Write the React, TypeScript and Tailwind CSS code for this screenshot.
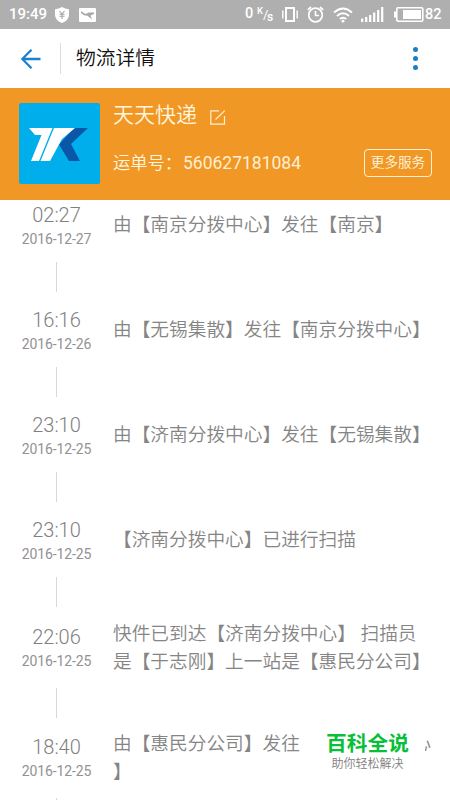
type Props_step = {
    time: string,
    date: string,
    text: string[],
    tail?: string,
}

const steps: Props_step[] = [
    { time: "02:27", date: "2016-12-27", text: ["由【南京分拨中心】发往【南京】"] },
    { time: "16:16", date: "2016-12-26", text: ["由【无锡集散】发往【南京分拨中心】"] },
    { time: "23:10", date: "2016-12-25", text: ["由【济南分拨中心】发往【无锡集散】"] },
    { time: "23:10", date: "2016-12-25", text: ["【济南分拨中心】已进行扫描"] },
    { time: "22:06", date: "2016-12-25", text: ["快件已到达【济南分拨中心】 扫描员", "是【于志刚】上一站是【惠民分公司】"] },
    { time: "18:40", date: "2016-12-25", text: ["由【惠民分公司】发往", "】"], tail: "心" },
];

function StatusBar() {
    return (
        <div className="flex h-[29px] w-full shrink-0 items-center bg-[#afafaf] text-white">
            <span className="ml-[9px] w-[46px] text-[15px] leading-none font-medium">19:49</span>
            <svg className="h-[16px] w-[14px]" viewBox="0 0 14 16">
                <path d="M7 0 Q10 2 14 2.2 V8 Q14 13 7 16 Q0 13 0 8 V2.2 Q4 2 7 0 Z" fill="#fff" />
                <path d="M4.5 4 L7 7 L9.5 4 M4.5 7.2 H9.5 M4.5 9.3 H9.5 M7 7 V12" stroke="#a5a5a5" strokeWidth="1.1" fill="none" />
            </svg>
            <svg className="ml-[10px] h-[14px] w-[17px]" viewBox="0 0 17 14">
                <rect width="17" height="14" rx="1" fill="#fff" />
                <path d="M2 3 L6.5 6 L9.5 4.5 H15 V6 L11.5 7.5 L13 11.5 L8.5 7.8 L5 7.2 L2 5 Z" fill="#a9a9a9" />
            </svg>
            <span className="ml-[149px] w-[10px] text-[14.5px] leading-none font-medium">0</span>
            <span className="ml-[2px] mb-[7px] w-[6px] text-[9.5px] leading-none font-medium">K</span>
            <span className="w-[4px] text-[13px] leading-none">/</span>
            <span className="mt-[4px] w-[15px] text-[12px] leading-none font-medium">s</span>
            <svg className="h-[15px] w-[16px]" viewBox="0 0 16 15" fill="none" stroke="#fff">
                <rect x="4" y="1" width="8" height="13" strokeWidth="2" />
                <path d="M0.8 3.5 V11.5 M15.2 3.5 V11.5" strokeWidth="1.4" />
            </svg>
            <svg className="ml-[9px] h-[17px] w-[17px]" viewBox="0 0 17 17" fill="none" stroke="#fff" strokeWidth="1.7">
                <circle cx="8.5" cy="9" r="6.8" />
                <path d="M8.5 5 V9.5 H12 M0.8 3.8 L4 1 M16.2 3.8 L13 1" />
            </svg>
            <svg className="ml-[9px] h-[16px] w-[20px]" viewBox="0 0 20 16" fill="none" stroke="#fff" strokeWidth="1.9">
                <path d="M1 5.5 Q10 -2.5 19 5.5 M4 9 Q10 3.6 16 9 M6.8 12 Q10 9.3 13.2 12" />
                <circle cx="10" cy="14.2" r="1.4" fill="#fff" stroke="none" />
            </svg>
            <svg className="ml-[8px] h-[15px] w-[23px]" viewBox="0 0 23 15" stroke="#fff" strokeWidth="2.2">
                <path d="M1.2 11.5 V15 M5.2 10 V15 M9.2 8 V15 M13.2 5.5 V15 M17.2 3 V15 M21.2 0 V15" />
            </svg>
            <svg className="ml-[10px] h-[15px] w-[30px]" viewBox="0 0 30 15">
                <rect x="2.8" y="0.8" width="26" height="13.4" rx="1.2" fill="none" stroke="#fff" strokeWidth="1.6" />
                <rect x="0" y="4.5" width="2.5" height="6" fill="#fff" />
                <rect x="9" y="3" width="18" height="9" fill="#fff" />
            </svg>
            <span className="mt-[2px] ml-px text-[14.5px] leading-none font-medium">82</span>
        </div>
    )
}

function TitleBar() {
    return (
        <header className="flex h-[59px] shrink-0 items-center bg-white">
            <svg className="ml-[21px] h-[20px] w-[20px]" viewBox="0 0 20 20" fill="none" stroke="#1b82d2" strokeWidth="2.3">
                <path d="M10.5 0.8 L1.3 10 L10.5 19.2 M1.3 10 H19.5" />
            </svg>
            <span className="ml-[19px] h-[31px] w-px bg-[#dcdcdc]" />
            <h1 className="ml-[15px] text-[19.8px] leading-none font-[350] text-[#111]">物流详情</h1>
            <span className="mr-[32px] ml-auto flex flex-col gap-[4px]">
                <span className="h-[5px] w-[5px] rounded-full bg-[#1b7fc4]" />
                <span className="h-[5px] w-[5px] rounded-full bg-[#1b7fc4]" />
                <span className="h-[5px] w-[5px] rounded-full bg-[#1b7fc4]" />
            </span>
        </header>
    )
}

function Courier() {
    return (
        <section className="flex h-[112px] shrink-0 items-start bg-[#f19726] pt-[15px] pl-[19px] text-[#fff6df]">
            <svg className="h-[81px] w-[81px] shrink-0" viewBox="0 0 81 81">
                <rect width="81" height="81" rx="2" fill="#00aeec" />
                <path d="M55 25 H69 L52 41 L61 58 H50 L40 41.5 Z" fill="#0a57a8" />
                <path d="M10 25 H33.5 L20 58 H12 L22.5 32 H16 Z M35 25 H56 L43 36 L31 58 H21.5 Z" fill="#fff" />
            </svg>
            <div className="ml-[13px] flex flex-1 flex-col">
                <div className="flex h-[24px] items-center">
                    <span className="text-[21px] leading-none font-[350]">天天快递</span>
                    <svg className="ml-[13px] mt-[5px] h-[15px] w-[16px]" viewBox="0 0 16 15" fill="none" stroke="#fff1cf" strokeWidth="1.2">
                        <path d="M9 0.8 H0.8 V14.2 H14.5 V6 M5.5 9.5 L14.8 0.6" />
                    </svg>
                </div>
                <div className="mt-[20px] flex h-[32px] items-center">
                    <span className="mt-[2px] w-[70px] text-[17.3px] leading-none font-[350]">运单号：</span>
                    <span className="mt-[2px] text-[17.5px] leading-none text-[#ffefcf]">560627181084</span>
                    <button className="mr-[18px] ml-auto h-[28px] w-[68px] rounded-[4px] border-[1.5px] border-[#fff1cf] pb-px text-[13.6px] leading-none font-[350]">更多服务</button>
                </div>
            </div>
        </section>
    )
}

function Step({ step }: { step: Props_step }) {
    const tall = step.text.length > 1;

    return (
        <li className={`flex shrink-0 ${tall ? "h-[110px] pt-[2px]" : "h-[105px]"}`}>
            <div className="flex w-[113px] flex-col items-center pt-[4px] text-[#808080]">
                <span className="text-[20px] leading-[22px] font-light">{step.time}</span>
                <span className="mt-[4px] text-[14px] leading-[18px] tracking-[-0.1px] text-[#929292]">{step.date}</span>
                <span className={`h-[30px] w-px shrink-0 bg-[#d8d8d8] ${tall ? "mt-[18px]" : "mt-[14px]"}`} />
            </div>
            <p className={`text-[18.7px] leading-[28px] font-[350] whitespace-pre text-[#858585] ${tall ? "-mt-[2px]" : "pt-[11px]"}`}>
                {step.text.map((line, index) => (
                    <span key={line} className="flex h-[28px]">
                        {line}
                        {step.tail && index === 0 && (
                            <span className="ml-[125px] flex w-[6px] justify-end overflow-hidden">{step.tail}</span>
                        )}
                    </span>
                ))}
            </p>
        </li>
    )
}

export default function App() {
    return (
        <main className="relative flex h-[800px] w-[450px] flex-col overflow-hidden bg-white font-[Roboto,'Noto_Sans_CJK_SC',sans-serif]">
            <StatusBar />
            <TitleBar />
            <Courier />
            <ul className="flex flex-1 flex-col overflow-hidden">
                {steps.map((step) => <Step key={step.time + step.text[0]} step={step} />)}
            </ul>
            <div className="absolute top-[722px] left-[306px] flex h-[54px] w-[119px] flex-col items-center pt-[11px] pl-[4px]">
                <span className="text-[20.7px] leading-[22px] font-bold text-[#08bf38]">百科全说</span>
                <span className="mt-[1px] text-[12px] leading-[16px] font-[350] text-[#808080]">助你轻松解决</span>
            </div>
        </main>
    )
}
